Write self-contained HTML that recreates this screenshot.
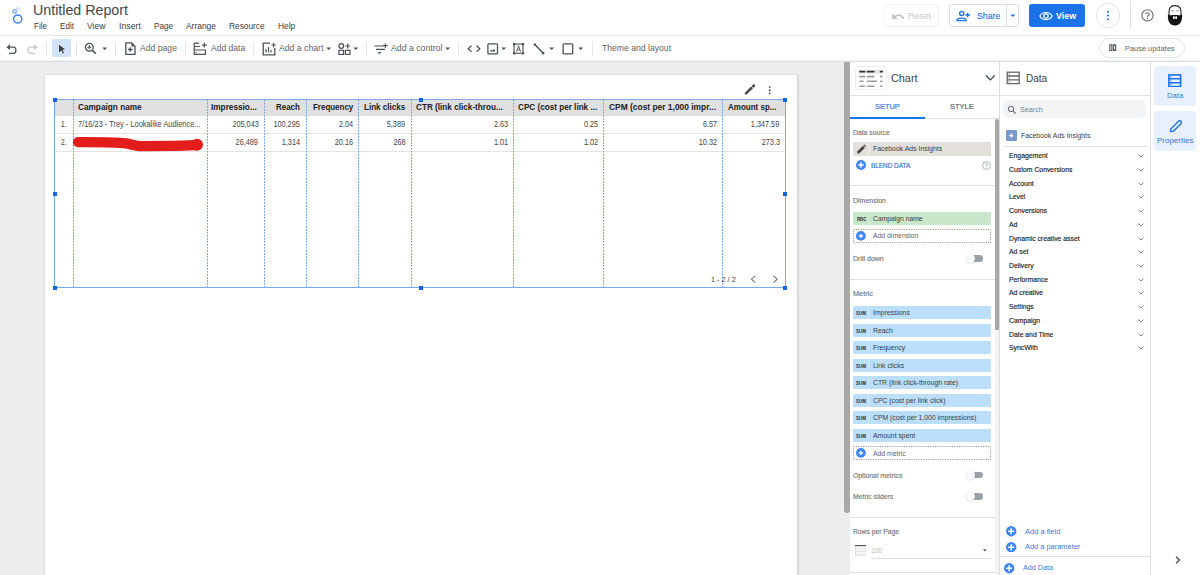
<!DOCTYPE html><html><head><meta charset="utf-8"><style>
html,body{margin:0;padding:0;width:1200px;height:575px;overflow:hidden;background:#fff;position:relative;font-family:"Liberation Sans",sans-serif}
.t{position:absolute;white-space:nowrap;line-height:1;}
.r{position:absolute;}
</style></head><body>
<div class="r" style="left:0px;top:35px;width:1200px;height:1px;background:#e4e6e9;"></div>
<svg class="r" style="left:8px;top:3px;" width="20" height="24" viewBox="0 0 20 24"><circle cx="9.7" cy="16" r="4.1" fill="none" stroke="#3d7ff0" stroke-width="1.45"/>
<circle cx="6.6" cy="8.5" r="1.75" fill="none" stroke="#4f8cf2" stroke-width="1.1"/>
<circle cx="9.6" cy="5.5" r="1.05" fill="none" stroke="#a9c5f7" stroke-width="0.9"/></svg>
<div class="t" style="left:33.10px;top:3px;font-size:14.20px;color:#44474a;transform:scaleX(1.0030);transform-origin:0 0;">Untitled Report</div>
<div class="t" style="left:33.50px;top:22px;font-size:8.60px;color:#3c4043;transform:scaleX(0.9383);transform-origin:0 0;">File</div>
<div class="t" style="left:59.75px;top:22px;font-size:8.60px;color:#3c4043;transform:scaleX(0.9448);transform-origin:0 0;">Edit</div>
<div class="t" style="left:87.00px;top:22px;font-size:8.60px;color:#3c4043;transform:scaleX(1.0050);transform-origin:0 0;">View</div>
<div class="t" style="left:118.75px;top:22px;font-size:8.60px;color:#3c4043;transform:scaleX(1.0159);transform-origin:0 0;">Insert</div>
<div class="t" style="left:153.70px;top:22px;font-size:8.60px;color:#3c4043;transform:scaleX(0.9561);transform-origin:0 0;">Page</div>
<div class="t" style="left:186.00px;top:22px;font-size:8.60px;color:#3c4043;transform:scaleX(0.9804);transform-origin:0 0;">Arrange</div>
<div class="t" style="left:229.30px;top:22px;font-size:8.60px;color:#3c4043;transform:scaleX(0.9699);transform-origin:0 0;">Resource</div>
<div class="t" style="left:278.30px;top:22px;font-size:8.60px;color:#3c4043;transform:scaleX(0.9779);transform-origin:0 0;">Help</div>
<div class="r" style="left:884px;top:4px;width:55px;height:23px;background:transparent;box-sizing:border-box;border:1px solid #eef0f1;border-radius:3px;"></div>
<svg class="r" style="left:891px;top:11px;" width="14" height="9" viewBox="0 0 14 9"><path d="M3.2 6.2 C6 3.2 10.5 3.2 12.8 7.8" fill="none" stroke="#c4c4c4" stroke-width="1.6"/><path d="M1.1 2.3 L1.1 7.9 L6.6 7.9 Z" fill="#c4c4c4"/></svg>
<div class="t" style="left:908.00px;top:12px;font-size:8.80px;color:#c9c9c9;transform:scaleX(1.0006);transform-origin:0 0;">Reset</div>
<div class="r" style="left:949px;top:4px;width:70px;height:23px;background:transparent;box-sizing:border-box;border:1px solid #dadce0;border-radius:3px;"></div>
<div class="r" style="left:1006px;top:5px;width:1px;height:21px;background:#dadce0;"></div>
<svg class="r" style="left:955px;top:10px;" width="17" height="12" viewBox="0 0 17 12"><circle cx="6.7" cy="3.4" r="2.1" fill="none" stroke="#1a73e8" stroke-width="1.35"/><path d="M1.8 10.6 C1.8 7.2 11.2 7.2 11.2 10.6 Z" fill="none" stroke="#1a73e8" stroke-width="1.35" stroke-linejoin="round"/><path d="M10.3 5 H15 M12.65 2.65 V7.35" stroke="#1a73e8" stroke-width="1.35"/></svg>
<div class="t" style="left:976.70px;top:12px;font-size:8.80px;color:#1a73e8;transform:scaleX(0.9924);transform-origin:0 0;-webkit-text-stroke:0.1px #1a73e8;">Share</div>
<svg class="r" style="left:1010px;top:14px;" width="6" height="4" viewBox="0 0 6 4"><path d="M0.3 0.5 H5.3 L2.8 3.1 Z" fill="#1a73e8"/></svg>
<div class="r" style="left:1029px;top:4px;width:56px;height:23px;background:#1a73e8;border-radius:3px;"></div>
<svg class="r" style="left:1038.8px;top:11px;" width="14" height="10" viewBox="0 0 14 10"><path d="M0.8 5 C3.3 0.3 10.7 0.3 13.2 5 C10.7 9.7 3.3 9.7 0.8 5 Z" fill="none" stroke="#fff" stroke-width="1.2"/><circle cx="7" cy="5" r="2.2" fill="none" stroke="#fff" stroke-width="1.2"/></svg>
<div class="t" style="left:1055.70px;top:12px;font-size:8.90px;color:#ffffff;font-weight:bold;transform:scaleX(0.9980);transform-origin:0 0;">View</div>
<div class="r" style="left:1096px;top:3px;width:24px;height:25px;background:#fff;box-sizing:border-box;border:1px solid #e3e3e3;border-radius:50%;"></div>
<svg class="r" style="left:1105px;top:9px;" width="6" height="13" viewBox="0 0 6 13"><circle cx="2.9" cy="3" r="1.05" fill="#1a73e8"/><circle cx="2.9" cy="6.6" r="1.05" fill="#1a73e8"/><circle cx="2.9" cy="10.2" r="1.05" fill="#1a73e8"/></svg>
<div class="r" style="left:1130px;top:1px;width:1px;height:28px;background:#e0e0e0;"></div>
<svg class="r" style="left:1140px;top:9px;" width="15" height="14" viewBox="0 0 15 14"><circle cx="7.5" cy="6.4" r="5.6" fill="none" stroke="#6a6a6a" stroke-width="1.1"/><path d="M5.7 5 C5.7 3.4 9.3 3.4 9.3 5.1 C9.3 6.4 7.5 6.5 7.5 7.9" fill="none" stroke="#6a6a6a" stroke-width="1.1"/><circle cx="7.5" cy="9.5" r="0.7" fill="#6a6a6a"/></svg>
<svg class="r" style="left:1166px;top:4px;" width="18" height="23" viewBox="0 0 18 23"><path d="M3 11 C2.6 4 4.5 1.6 9 1.6 C13.5 1.6 15.4 4 15 11" fill="#fff" stroke="#262626" stroke-width="1.1"/>
<path d="M5 6.8 H8 M10 6.8 H13" stroke="#888" stroke-width="0.8"/>
<path d="M1.9 10.6 C2.2 10.2 2.8 10.4 3.2 10.9 L4.2 11.3 C5.2 11.4 6.2 11 7 10.9 L11 10.9 C11.8 11 12.8 11.4 13.8 11.3 L14.8 10.9 C15.2 10.4 15.8 10.2 16.1 10.6 C16.4 17.5 14.2 21.6 9 21.6 C3.8 21.6 1.6 17.5 1.9 10.6 Z" fill="#111"/>
<path d="M7 12.3 H11 V15 H7 Z" fill="#fff"/><path d="M8.3 12.3 H9.7 V13.2 H8.3 Z M8.4 14.2 H9.6 V15 H8.4 Z" fill="#222"/>
<circle cx="5" cy="17.5" r="0.5" fill="#444"/><circle cx="8" cy="18.3" r="0.5" fill="#444"/><circle cx="11" cy="18.3" r="0.5" fill="#444"/><circle cx="13.6" cy="17.5" r="0.5" fill="#444"/></svg>
<div class="r" style="left:0px;top:60px;width:1200px;height:1px;background:#f3f4f5;"></div>
<div class="r" style="left:0px;top:61px;width:1200px;height:1px;background:#dadce0;"></div>
<svg class="r" style="left:6px;top:43.5px;" width="12" height="11" viewBox="0 0 12 11"><path d="M3.5 3.2 H7.8 C10.6 3.2 10.8 9.4 7.5 9.4 H3" fill="none" stroke="#4d5156" stroke-width="1.3"/><path d="M0.5 3.2 L3.9 0.1 V6.3 Z" fill="#4d5156"/></svg>
<svg class="r" style="left:26px;top:43.5px;" width="12" height="11" viewBox="0 0 12 11"><path d="M8.5 3.2 H4.2 C1.4 3.2 1.2 9.4 4.5 9.4 H9" fill="none" stroke="#c8c8c8" stroke-width="1.3"/><path d="M11.5 3.2 L8.1 0.1 V6.3 Z" fill="#c8c8c8"/></svg>
<div class="r" style="left:46px;top:42px;width:1px;height:15px;background:#e5e5e5;"></div>
<div class="r" style="left:76px;top:42px;width:1px;height:15px;background:#e5e5e5;"></div>
<div class="r" style="left:115px;top:42px;width:1px;height:15px;background:#e5e5e5;"></div>
<div class="r" style="left:185px;top:42px;width:1px;height:15px;background:#e5e5e5;"></div>
<div class="r" style="left:253px;top:42px;width:1px;height:15px;background:#e5e5e5;"></div>
<div class="r" style="left:366px;top:42px;width:1px;height:15px;background:#e5e5e5;"></div>
<div class="r" style="left:458px;top:42px;width:1px;height:15px;background:#e5e5e5;"></div>
<div class="r" style="left:592px;top:42px;width:1px;height:15px;background:#e5e5e5;"></div>
<div class="r" style="left:52px;top:39px;width:19px;height:18px;background:#d3e3fd;border-radius:2px;"></div>
<svg class="r" style="left:57.5px;top:44px;" width="8" height="10" viewBox="0 0 8 10"><path d="M1 0.8 L7.2 5.4 L4.4 5.8 L6 9 L4.8 9.6 L3.3 6.4 L1 8.3 Z" fill="#3c4043"/></svg>
<svg class="r" style="left:84px;top:42px;" width="14" height="13" viewBox="0 0 14 13"><circle cx="5.3" cy="5.3" r="3.9" fill="none" stroke="#4d5156" stroke-width="1.3"/><path d="M8.1 8.1 L11.8 11.6" stroke="#4d5156" stroke-width="1.5"/><path d="M3.3 5.3 H7.3 M5.3 3.3 V7.3" stroke="#4d5156" stroke-width="1.1"/></svg>
<svg class="r" style="left:101.5px;top:46.8px;" width="6" height="4" viewBox="0 0 6 4"><path d="M0.3 0.5 H5.2 L2.75 3 Z" fill="#4d5156"/></svg>
<svg class="r" style="left:123.5px;top:42px;" width="13" height="14" viewBox="0 0 13 14"><path d="M1.8 0.9 H7.6 L11 4.3 V12.3 H1.8 Z" fill="none" stroke="#4d5156" stroke-width="1.3"/><path d="M7.4 1 V4.5 H10.9 Z" fill="#4d5156"/><path d="M4.1 7.5 H8.5 M6.3 5.3 V9.7" stroke="#4d5156" stroke-width="1.3"/></svg>
<div class="t" style="left:139.90px;top:44px;font-size:8.60px;color:#5f6368;transform:scaleX(1.0034);transform-origin:0 0;">Add page</div>
<svg class="r" style="left:192.5px;top:42px;" width="15" height="14" viewBox="0 0 15 14"><path d="M1.2 1 V12.3 H12.4 V8 H1.2 M1.2 1.1 H6 M1.2 4.5 H7" fill="none" stroke="#4d5156" stroke-width="1.2"/><path d="M9 3.2 H13.8 M11.4 0.8 V5.6" stroke="#4d5156" stroke-width="1.2"/><path d="M2.5 10.4 H4" stroke="#4d5156" stroke-width="0.9"/></svg>
<div class="t" style="left:210.60px;top:44px;font-size:8.60px;color:#5f6368;transform:scaleX(0.9917);transform-origin:0 0;">Add data</div>
<svg class="r" style="left:261.5px;top:42px;" width="14" height="14" viewBox="0 0 14 14"><path d="M8 1.2 H1.2 V12.8 H12.8 V6" fill="none" stroke="#4d5156" stroke-width="1.3"/><path d="M4 10.5 V7 M6.5 10.5 V5 M9 10.5 V8" stroke="#4d5156" stroke-width="1.2"/><path d="M9.5 3 H13.8 M11.6 0.8 V5.2" stroke="#4d5156" stroke-width="1.2"/></svg>
<div class="t" style="left:278.50px;top:44px;font-size:8.60px;color:#5f6368;transform:scaleX(1.0095);transform-origin:0 0;">Add a chart</div>
<svg class="r" style="left:325.8px;top:46.8px;" width="6" height="4" viewBox="0 0 6 4"><path d="M0.3 0.5 H5.2 L2.75 3 Z" fill="#4d5156"/></svg>
<svg class="r" style="left:337.5px;top:42.5px;" width="14" height="12" viewBox="0 0 14 12"><circle cx="3.3" cy="3" r="2.4" fill="none" stroke="#4d5156" stroke-width="1.2"/><rect x="0.9" y="7.3" width="4.6" height="4.1" fill="none" stroke="#4d5156" stroke-width="1.2"/><rect x="7.4" y="7.3" width="4.6" height="4.1" fill="none" stroke="#4d5156" stroke-width="1.2"/><path d="M7.3 3 H12.3 M9.8 0.6 V5.4" stroke="#4d5156" stroke-width="1.2"/></svg>
<svg class="r" style="left:352.5px;top:46.8px;" width="6" height="4" viewBox="0 0 6 4"><path d="M0.3 0.5 H5.2 L2.75 3 Z" fill="#4d5156"/></svg>
<svg class="r" style="left:373.5px;top:42px;" width="14" height="13" viewBox="0 0 14 13"><path d="M0.5 4 H9 M2 7.3 H11 M4.5 10.5 H7" stroke="#4d5156" stroke-width="1.2"/><path d="M9 3.6 H13.6 M11.3 1.2 V6" stroke="#4d5156" stroke-width="1.1"/><path d="M5 10.5 V12" stroke="#4d5156" stroke-width="1.2"/></svg>
<div class="t" style="left:390.60px;top:44px;font-size:8.60px;color:#5f6368;transform:scaleX(1.0142);transform-origin:0 0;">Add a control</div>
<svg class="r" style="left:445.3px;top:46.8px;" width="6" height="4" viewBox="0 0 6 4"><path d="M0.3 0.5 H5.2 L2.75 3 Z" fill="#4d5156"/></svg>
<svg class="r" style="left:466.5px;top:44.5px;" width="14" height="8" viewBox="0 0 14 8"><path d="M4.5 0.7 L1.2 3.8 L4.5 6.9 M9.5 0.7 L12.8 3.8 L9.5 6.9" fill="none" stroke="#4d5156" stroke-width="1.3"/></svg>
<svg class="r" style="left:486.5px;top:42.5px;" width="12" height="12" viewBox="0 0 12 12"><rect x="0.9" y="0.9" width="9.6" height="10" rx="0.9" fill="none" stroke="#4d5156" stroke-width="1.3"/><path d="M2.8 8.4 L4.3 6.5 L5.4 7.7 L6.9 5.8 L8.7 8.4 Z" fill="#4d5156"/></svg>
<svg class="r" style="left:500.8px;top:46.6px;" width="6" height="4" viewBox="0 0 6 4"><path d="M0.3 0.5 H5.2 L2.75 3 Z" fill="#4d5156"/></svg>
<svg class="r" style="left:512.8px;top:42.6px;" width="12" height="12" viewBox="0 0 12 12"><rect x="1.1" y="1.1" width="8.9" height="9.2" fill="none" stroke="#4d5156" stroke-width="1.1"/><rect x="0" y="0" width="2.3" height="2.3" fill="#4d5156"/><rect x="8.9" y="0" width="2.3" height="2.3" fill="#4d5156"/><rect x="0" y="9.1" width="2.3" height="2.3" fill="#4d5156"/><rect x="8.9" y="9.1" width="2.3" height="2.3" fill="#4d5156"/><path d="M3.6 8.9 L5.6 2.8 L7.6 8.9 M4.3 6.9 H6.9" fill="none" stroke="#4d5156" stroke-width="0.9"/></svg>
<svg class="r" style="left:532.5px;top:42.5px;" width="12" height="12" viewBox="0 0 12 12"><path d="M1.8 1.4 L10.2 10.2" stroke="#4d5156" stroke-width="1.4"/><circle cx="1.8" cy="1.4" r="1.2" fill="#4d5156"/><circle cx="10.2" cy="10.2" r="1.2" fill="#4d5156"/></svg>
<svg class="r" style="left:549px;top:46.6px;" width="6" height="4" viewBox="0 0 6 4"><path d="M0.3 0.5 H5.2 L2.75 3 Z" fill="#4d5156"/></svg>
<svg class="r" style="left:561.5px;top:42.5px;" width="12" height="12" viewBox="0 0 12 12"><rect x="1.1" y="0.9" width="9.6" height="10" rx="0.9" fill="none" stroke="#4d5156" stroke-width="1.3"/></svg>
<svg class="r" style="left:578px;top:46.6px;" width="6" height="4" viewBox="0 0 6 4"><path d="M0.3 0.5 H5.2 L2.75 3 Z" fill="#4d5156"/></svg>
<div class="t" style="left:601.50px;top:44px;font-size:8.60px;color:#5f6368;transform:scaleX(1.0037);transform-origin:0 0;">Theme and layout</div>
<div class="r" style="left:1099px;top:38px;width:86px;height:20px;background:transparent;box-sizing:border-box;border:1px solid #e2e3e5;border-radius:10px;"></div>
<svg class="r" style="left:1108.5px;top:44.3px;" width="8" height="8" viewBox="0 0 8 8"><rect x="0.8" y="0.8" width="2.1" height="5.6" fill="none" stroke="#5f6368" stroke-width="1.2"/><rect x="4.5" y="0.8" width="2.1" height="5.6" fill="none" stroke="#5f6368" stroke-width="1.2"/></svg>
<div class="t" style="left:1124.75px;top:45px;font-size:7.80px;color:#5f6368;transform:scaleX(0.9512);transform-origin:0 0;">Pause updates</div>
<div class="r" style="left:0px;top:62px;width:850px;height:513px;background:#ededed;"></div>
<div class="r" style="left:45px;top:75px;width:752px;height:505px;background:#ffffff;box-shadow:0 0 2px 0.5px rgba(0,0,0,0.16);"></div>
<div class="r" style="left:844px;top:62px;width:6px;height:451px;background:#a8a8a8;border-radius:0 0 3px 3px;"></div>
<div class="r" style="left:55px;top:100px;width:730px;height:16px;background:#e0e0e0;"></div>
<div class="r" style="left:55px;top:133px;width:730px;height:1px;background:#e3e3e3;"></div>
<div class="r" style="left:55px;top:151px;width:730px;height:1px;background:#e3e3e3;"></div>
<div class="r" style="left:73px;top:100px;width:1px;height:187px;background:repeating-linear-gradient(to bottom,#6a9ff0 0 1px,#94baf5 1px 2px,transparent 2px 3px);"></div>
<div class="r" style="left:207px;top:100px;width:1px;height:187px;background:repeating-linear-gradient(to bottom,#6a9ff0 0 1px,#94baf5 1px 2px,transparent 2px 3px);"></div>
<div class="r" style="left:264px;top:100px;width:1px;height:187px;background:repeating-linear-gradient(to bottom,#6a9ff0 0 1px,#94baf5 1px 2px,transparent 2px 3px);"></div>
<div class="r" style="left:306px;top:100px;width:1px;height:187px;background:repeating-linear-gradient(to bottom,#6a9ff0 0 1px,#94baf5 1px 2px,transparent 2px 3px);"></div>
<div class="r" style="left:358px;top:100px;width:1px;height:187px;background:repeating-linear-gradient(to bottom,#6a9ff0 0 1px,#94baf5 1px 2px,transparent 2px 3px);"></div>
<div class="r" style="left:411px;top:100px;width:1px;height:187px;background:repeating-linear-gradient(to bottom,#6a9ff0 0 1px,#94baf5 1px 2px,transparent 2px 3px);"></div>
<div class="r" style="left:513px;top:100px;width:1px;height:187px;background:repeating-linear-gradient(to bottom,#6a9ff0 0 1px,#94baf5 1px 2px,transparent 2px 3px);"></div>
<div class="r" style="left:603px;top:100px;width:1px;height:187px;background:repeating-linear-gradient(to bottom,#6a9ff0 0 1px,#94baf5 1px 2px,transparent 2px 3px);"></div>
<div class="r" style="left:722px;top:100px;width:1px;height:187px;background:repeating-linear-gradient(to bottom,#6a9ff0 0 1px,#94baf5 1px 2px,transparent 2px 3px);"></div>
<div class="t" style="left:78.00px;top:103px;font-size:8.60px;color:#202124;font-weight:bold;transform:scaleX(0.9590);transform-origin:0 0;">Campaign name</div>
<div class="t" style="left:211.40px;top:103px;font-size:8.60px;color:#202124;font-weight:bold;transform:scaleX(0.9582);transform-origin:0 0;">Impressio...</div>
<div class="t" style="left:276.10px;top:103px;font-size:8.60px;color:#202124;font-weight:bold;transform:scaleX(0.9260);transform-origin:0 0;">Reach</div>
<div class="t" style="left:312.75px;top:103px;font-size:8.60px;color:#202124;font-weight:bold;transform:scaleX(0.9255);transform-origin:0 0;">Frequency</div>
<div class="t" style="left:363.70px;top:103px;font-size:8.60px;color:#202124;font-weight:bold;transform:scaleX(0.9391);transform-origin:0 0;">Link clicks</div>
<div class="t" style="left:415.60px;top:103px;font-size:8.60px;color:#202124;font-weight:bold;transform:scaleX(0.9522);transform-origin:0 0;">CTR (link click-throu...</div>
<div class="t" style="left:517.75px;top:103px;font-size:8.60px;color:#202124;font-weight:bold;transform:scaleX(0.9477);transform-origin:0 0;">CPC (cost per link ...</div>
<div class="t" style="left:608.65px;top:103px;font-size:8.60px;color:#202124;font-weight:bold;transform:scaleX(0.9785);transform-origin:0 0;">CPM (cost per 1,000 impr...</div>
<div class="t" style="left:727.50px;top:103px;font-size:8.60px;color:#202124;font-weight:bold;transform:scaleX(0.9314);transform-origin:0 0;">Amount sp...</div>
<div class="t" style="left:60.50px;top:120px;font-size:8.70px;color:#454545;transform:scaleX(0.7580);transform-origin:0 0;">1.</div>
<div class="t" style="left:78.00px;top:120px;font-size:8.70px;color:#454545;transform:scaleX(0.8542);transform-origin:0 0;">7/16/23 - Trey - Lookalike Audience...</div>
<div class="t" style="right:941.70px;text-align:right;top:120px;font-size:8.80px;color:#454545;transform:scaleX(0.83);transform-origin:100% 0;">205,043</div>
<div class="t" style="right:900.00px;text-align:right;top:120px;font-size:8.80px;color:#454545;transform:scaleX(0.83);transform-origin:100% 0;">100,295</div>
<div class="t" style="right:847.00px;text-align:right;top:120px;font-size:8.80px;color:#454545;transform:scaleX(0.83);transform-origin:100% 0;">2.04</div>
<div class="t" style="right:794.50px;text-align:right;top:120px;font-size:8.80px;color:#454545;transform:scaleX(0.83);transform-origin:100% 0;">5,389</div>
<div class="t" style="right:692.30px;text-align:right;top:120px;font-size:8.80px;color:#454545;transform:scaleX(0.83);transform-origin:100% 0;">2.63</div>
<div class="t" style="right:602.00px;text-align:right;top:120px;font-size:8.80px;color:#454545;transform:scaleX(0.83);transform-origin:100% 0;">0.25</div>
<div class="t" style="right:483.00px;text-align:right;top:120px;font-size:8.80px;color:#454545;transform:scaleX(0.83);transform-origin:100% 0;">6.57</div>
<div class="t" style="right:420.40px;text-align:right;top:120px;font-size:8.80px;color:#454545;transform:scaleX(0.83);transform-origin:100% 0;">1,347.59</div>
<div class="t" style="left:60.50px;top:138px;font-size:8.70px;color:#454545;transform:scaleX(0.7580);transform-origin:0 0;">2.</div>
<div class="t" style="right:941.70px;text-align:right;top:138px;font-size:8.80px;color:#454545;transform:scaleX(0.83);transform-origin:100% 0;">26,489</div>
<div class="t" style="right:900.00px;text-align:right;top:138px;font-size:8.80px;color:#454545;transform:scaleX(0.83);transform-origin:100% 0;">1,314</div>
<div class="t" style="right:847.00px;text-align:right;top:138px;font-size:8.80px;color:#454545;transform:scaleX(0.83);transform-origin:100% 0;">20.16</div>
<div class="t" style="right:794.50px;text-align:right;top:138px;font-size:8.80px;color:#454545;transform:scaleX(0.83);transform-origin:100% 0;">268</div>
<div class="t" style="right:692.30px;text-align:right;top:138px;font-size:8.80px;color:#454545;transform:scaleX(0.83);transform-origin:100% 0;">1.01</div>
<div class="t" style="right:602.00px;text-align:right;top:138px;font-size:8.80px;color:#454545;transform:scaleX(0.83);transform-origin:100% 0;">1.02</div>
<div class="t" style="right:483.00px;text-align:right;top:138px;font-size:8.80px;color:#454545;transform:scaleX(0.83);transform-origin:100% 0;">10.32</div>
<div class="t" style="right:420.40px;text-align:right;top:138px;font-size:8.80px;color:#454545;transform:scaleX(0.83);transform-origin:100% 0;">273.3</div>
<svg class="r" style="left:68px;top:132px;" width="140" height="24" viewBox="0 0 140 24"><path d="M10 10.2 C30 10.1 50 10.5 58 11.4 C64 12.2 66 14 72 14.1 L105 13.9 C115 13.8 122 13.4 128 13.1" fill="none" stroke="#e31c1c" stroke-width="10.2" stroke-linecap="round"/><circle cx="129" cy="12.8" r="6" fill="#e31c1c"/></svg>
<div class="r" style="left:54px;top:99px;width:732px;height:189px;background:transparent;box-sizing:border-box;border:1px solid #79a8f3;"></div>
<div class="r" style="left:53px;top:98px;width:4px;height:4px;background:#1266e6;"></div>
<div class="r" style="left:419px;top:98px;width:4px;height:4px;background:#1266e6;"></div>
<div class="r" style="left:783px;top:98px;width:4px;height:4px;background:#1266e6;"></div>
<div class="r" style="left:53px;top:192px;width:4px;height:4px;background:#1266e6;"></div>
<div class="r" style="left:783px;top:192px;width:4px;height:4px;background:#1266e6;"></div>
<div class="r" style="left:53px;top:286px;width:4px;height:4px;background:#1266e6;"></div>
<div class="r" style="left:419px;top:286px;width:4px;height:4px;background:#1266e6;"></div>
<div class="r" style="left:783px;top:286px;width:4px;height:4px;background:#1266e6;"></div>
<div class="t" style="left:710.60px;top:276px;font-size:8.00px;color:#3c4043;transform:scaleX(0.9105);transform-origin:0 0;">1 - 2 / 2</div>
<svg class="r" style="left:749.5px;top:274.5px;" width="7" height="9" viewBox="0 0 7 9"><path d="M5.2 0.8 L1.5 4.2 L5.2 7.6" fill="none" stroke="#777" stroke-width="1.1"/></svg>
<svg class="r" style="left:771.5px;top:274.5px;" width="7" height="9" viewBox="0 0 7 9"><path d="M1.5 0.8 L5.2 4.2 L1.5 7.6" fill="none" stroke="#777" stroke-width="1.1"/></svg>
<svg class="r" style="left:743px;top:83px;" width="13" height="13" viewBox="0 0 13 13"><path d="M3 10.4 L10.9 2.5" stroke="#4a4a4a" stroke-width="2.5" stroke-linecap="round"/><path d="M7.9 3 L10.4 5.5" stroke="#fff" stroke-width="0.8"/></svg>
<svg class="r" style="left:767px;top:84px;" width="6" height="12" viewBox="0 0 6 12"><circle cx="2.7" cy="3.1" r="0.95" fill="#4a4a4a"/><circle cx="2.7" cy="6.3" r="0.95" fill="#4a4a4a"/><circle cx="2.7" cy="9.4" r="0.95" fill="#4a4a4a"/></svg>
<div class="r" style="left:850px;top:62px;width:149px;height:513px;background:#ffffff;"></div>
<div class="r" style="left:999px;top:62px;width:1px;height:513px;background:#dadce0;"></div>
<div class="r" style="left:850px;top:95px;width:149px;height:1px;background:#e0e0e0;"></div>
<div class="r" style="left:855px;top:66px;width:32px;height:24px;background:#fff;box-sizing:border-box;border:1px solid #ebebeb;border-radius:3px;"></div>
<svg class="r" style="left:857px;top:69px;" width="28" height="20" viewBox="0 0 28 20"><rect x="1.4" y="0.9" width="25.3" height="3.6" fill="#e4e4e4"/>
<path d="M3 2.6 H7.6 M10.6 2.6 H16.8 M23.6 2.6 H25.2" stroke="#333" stroke-width="1.8" stroke-linecap="round"/>
<path d="M3 7.6 H7.6 M10.6 7.6 H16.8 M23.6 7.6 H25" stroke="#999" stroke-width="1.6" stroke-linecap="round"/>
<path d="M3 12.3 H6 M10.6 12.3 H19.3 M23.6 12.3 H25" stroke="#999" stroke-width="1.6" stroke-linecap="round"/>
<path d="M3 17.2 H7.6 M10.6 17.2 H16.8 M23.6 17.2 H25" stroke="#999" stroke-width="1.6" stroke-linecap="round"/>
<path d="M1.4 5 H26.7 M1.4 9.9 H26.7 M1.4 14.7 H26.7" stroke="#f2f2f2" stroke-width="0.6"/></svg>
<div class="t" style="left:890.70px;top:73px;font-size:10.80px;color:#3c4043;transform:scaleX(1.0036);transform-origin:0 0;">Chart</div>
<svg class="r" style="left:985px;top:73.5px;" width="11" height="8" viewBox="0 0 11 8"><path d="M1 1.5 L5.3 5.8 L9.6 1.5" fill="none" stroke="#3c4043" stroke-width="1.2"/></svg>
<div class="t" style="left:874.70px;top:103px;font-size:7.60px;color:#3b78e7;transform:scaleX(0.9788);transform-origin:0 0;-webkit-text-stroke:0.2px #3b78e7;">SETUP</div>
<div class="t" style="left:950.20px;top:103px;font-size:7.60px;color:#5f6368;transform:scaleX(0.9844);transform-origin:0 0;-webkit-text-stroke:0.2px #5f6368;">STYLE</div>
<div class="r" style="left:850px;top:118px;width:149px;height:1px;background:#e0e0e0;"></div>
<div class="r" style="left:850px;top:117px;width:75px;height:2px;background:#1a73e8;"></div>
<div class="r" style="left:995px;top:119px;width:4px;height:211px;background:#a8a8a8;border-radius:2px 2px 0 0;"></div>
<div class="t" style="left:853.00px;top:129px;font-size:7.00px;color:#707070;transform:scaleX(0.9723);transform-origin:0 0;-webkit-text-stroke:0.12px #707070;">Data source</div>
<div class="r" style="left:853px;top:142px;width:138px;height:14px;background:#e3dfdb;border-radius:1px;"></div>
<div class="r" style="left:868px;top:142px;width:2px;height:14px;background:#ece9e6;"></div>
<svg class="r" style="left:856px;top:144px;" width="10" height="11" viewBox="0 0 10 11"><path d="M1.5 9.5 L1.2 7.6 L7 1.8 L8.9 3.7 L3.1 9.5 Z" fill="#444"/><path d="M7.6 1.2 L8.4 0.4 L10.3 2.3 L9.5 3.1 Z" fill="#444"/></svg>
<div class="t" style="left:873.00px;top:145px;font-size:7.20px;color:#3c4043;transform:scaleX(0.9566);transform-origin:0 0;">Facebook Ads Insights</div>
<svg class="r" style="left:855.6px;top:159.8px;" width="10" height="10" viewBox="0 0 10 10"><circle cx="5" cy="5" r="5" fill="#4285f4"/><path d="M2.3 5 H7.7 M5 2.3 V7.7" stroke="#fff" stroke-width="1.5"/></svg>
<div class="t" style="left:870.70px;top:163px;font-size:6.90px;color:#3f76d9;transform:scaleX(0.9290);transform-origin:0 0;-webkit-text-stroke:0.2px #3f76d9;">BLEND DATA</div>
<svg class="r" style="left:981.5px;top:161px;" width="9" height="9" viewBox="0 0 9 9"><circle cx="4.5" cy="4.5" r="3.9" fill="none" stroke="#9aa0a6" stroke-width="0.8"/><path d="M3.3 3.6 C3.3 2.3 5.7 2.3 5.7 3.6 C5.7 4.5 4.5 4.6 4.5 5.6" fill="none" stroke="#9aa0a6" stroke-width="0.8"/><circle cx="4.5" cy="6.9" r="0.45" fill="#9aa0a6"/></svg>
<div class="r" style="left:850px;top:185px;width:145px;height:1px;background:#e0e0e0;"></div>
<div class="t" style="left:853.00px;top:197px;font-size:7.20px;color:#707070;transform:scaleX(0.9702);transform-origin:0 0;-webkit-text-stroke:0.12px #707070;">Dimension</div>
<div class="r" style="left:853px;top:212px;width:138px;height:13px;background:#c8e6c9;border-radius:1px;"></div>
<div class="r" style="left:868px;top:212px;width:1px;height:13px;background:#d5ecd6;"></div>
<div class="t" style="left:856.70px;top:216px;font-size:6.20px;color:#2d2d2d;font-weight:bold;transform:scaleX(0.6922);transform-origin:0 0;">RBC</div>
<div class="t" style="left:873.20px;top:215px;font-size:7.30px;color:#3c4043;transform:scaleX(0.9261);transform-origin:0 0;">Campaign name</div>
<svg class="r" style="left:853px;top:229px;" width="138" height="14" viewBox="0 0 138 14"><rect x="0.5" y="0.5" width="137" height="13" fill="none" stroke="#9a9a9a" stroke-width="1" stroke-dasharray="1.2 1.2"/></svg>
<svg class="r" style="left:856.2px;top:231px;" width="9.8" height="9.8" viewBox="0 0 9.8 9.8"><circle cx="4.9" cy="4.9" r="4.9" fill="#4285f4"/><path d="M2.7 4.9 H7.1000000000000005 M4.9 2.7 V7.1000000000000005" stroke="#fff" stroke-width="1.3"/></svg>
<div class="t" style="left:873.20px;top:232px;font-size:7.20px;color:#5f6368;transform:scaleX(0.9511);transform-origin:0 0;">Add dimension</div>
<div class="t" style="left:853.00px;top:255px;font-size:7.20px;color:#707070;transform:scaleX(0.9744);transform-origin:0 0;-webkit-text-stroke:0.12px #707070;">Drill down</div>
<div class="r" style="left:968px;top:255.3px;width:15.3px;height:6.5px;background:#9aa0a6;border-radius:3.3px;"></div>
<div class="r" style="left:966px;top:253.9px;width:9.4px;height:9.4px;background:#fafafa;border-radius:50%;box-shadow:0 0.3px 1.2px rgba(0,0,0,0.28);"></div>
<div class="r" style="left:850px;top:279px;width:145px;height:1px;background:#e0e0e0;"></div>
<div class="t" style="left:853.00px;top:290px;font-size:7.20px;color:#707070;transform:scaleX(1.0154);transform-origin:0 0;-webkit-text-stroke:0.12px #707070;">Metric</div>
<div class="r" style="left:853px;top:306px;width:138px;height:13px;background:#bbdefb;border-radius:1px;"></div>
<div class="r" style="left:868px;top:306px;width:1px;height:13px;background:#cde5fb;"></div>
<div class="t" style="left:856.00px;top:310px;font-size:6.00px;color:#2d2d2d;font-weight:bold;transform:scaleX(0.7501);transform-origin:0 0;">SUM</div>
<div class="t" style="left:873.20px;top:309px;font-size:7.20px;color:#3c4043;transform:scaleX(0.95);transform-origin:0 0;">Impressions</div>
<div class="r" style="left:853px;top:324px;width:138px;height:13px;background:#bbdefb;border-radius:1px;"></div>
<div class="r" style="left:868px;top:324px;width:1px;height:13px;background:#cde5fb;"></div>
<div class="t" style="left:856.00px;top:328px;font-size:6.00px;color:#2d2d2d;font-weight:bold;transform:scaleX(0.7501);transform-origin:0 0;">SUM</div>
<div class="t" style="left:873.20px;top:327px;font-size:7.20px;color:#3c4043;transform:scaleX(0.95);transform-origin:0 0;">Reach</div>
<div class="r" style="left:853px;top:341px;width:138px;height:13px;background:#bbdefb;border-radius:1px;"></div>
<div class="r" style="left:868px;top:341px;width:1px;height:13px;background:#cde5fb;"></div>
<div class="t" style="left:856.00px;top:345px;font-size:6.00px;color:#2d2d2d;font-weight:bold;transform:scaleX(0.7501);transform-origin:0 0;">SUM</div>
<div class="t" style="left:873.20px;top:344px;font-size:7.20px;color:#3c4043;transform:scaleX(0.95);transform-origin:0 0;">Frequency</div>
<div class="r" style="left:853px;top:359px;width:138px;height:13px;background:#bbdefb;border-radius:1px;"></div>
<div class="r" style="left:868px;top:359px;width:1px;height:13px;background:#cde5fb;"></div>
<div class="t" style="left:856.00px;top:363px;font-size:6.00px;color:#2d2d2d;font-weight:bold;transform:scaleX(0.7501);transform-origin:0 0;">SUM</div>
<div class="t" style="left:873.20px;top:362px;font-size:7.20px;color:#3c4043;transform:scaleX(0.95);transform-origin:0 0;">Link clicks</div>
<div class="r" style="left:853px;top:376px;width:138px;height:13px;background:#bbdefb;border-radius:1px;"></div>
<div class="r" style="left:868px;top:376px;width:1px;height:13px;background:#cde5fb;"></div>
<div class="t" style="left:856.00px;top:380px;font-size:6.00px;color:#2d2d2d;font-weight:bold;transform:scaleX(0.7501);transform-origin:0 0;">SUM</div>
<div class="t" style="left:873.20px;top:379px;font-size:7.20px;color:#3c4043;transform:scaleX(0.95);transform-origin:0 0;">CTR (link click-through rate)</div>
<div class="r" style="left:853px;top:394px;width:138px;height:13px;background:#bbdefb;border-radius:1px;"></div>
<div class="r" style="left:868px;top:394px;width:1px;height:13px;background:#cde5fb;"></div>
<div class="t" style="left:856.00px;top:398px;font-size:6.00px;color:#2d2d2d;font-weight:bold;transform:scaleX(0.7501);transform-origin:0 0;">SUM</div>
<div class="t" style="left:873.20px;top:397px;font-size:7.20px;color:#3c4043;transform:scaleX(0.95);transform-origin:0 0;">CPC (cost per link click)</div>
<div class="r" style="left:853px;top:411px;width:138px;height:13px;background:#bbdefb;border-radius:1px;"></div>
<div class="r" style="left:868px;top:411px;width:1px;height:13px;background:#cde5fb;"></div>
<div class="t" style="left:856.00px;top:415px;font-size:6.00px;color:#2d2d2d;font-weight:bold;transform:scaleX(0.7501);transform-origin:0 0;">SUM</div>
<div class="t" style="left:873.20px;top:414px;font-size:7.20px;color:#3c4043;transform:scaleX(0.95);transform-origin:0 0;">CPM (cost per 1,000 impressions)</div>
<div class="r" style="left:853px;top:429px;width:138px;height:13px;background:#bbdefb;border-radius:1px;"></div>
<div class="r" style="left:868px;top:429px;width:1px;height:13px;background:#cde5fb;"></div>
<div class="t" style="left:856.00px;top:433px;font-size:6.00px;color:#2d2d2d;font-weight:bold;transform:scaleX(0.7501);transform-origin:0 0;">SUM</div>
<div class="t" style="left:873.20px;top:432px;font-size:7.20px;color:#3c4043;transform:scaleX(0.95);transform-origin:0 0;">Amount spent</div>
<svg class="r" style="left:853px;top:446px;" width="138" height="14" viewBox="0 0 138 14"><rect x="0.5" y="0.5" width="137" height="13" fill="none" stroke="#9a9a9a" stroke-width="1" stroke-dasharray="1.2 1.2"/></svg>
<svg class="r" style="left:856.2px;top:448px;" width="9.8" height="9.8" viewBox="0 0 9.8 9.8"><circle cx="4.9" cy="4.9" r="4.9" fill="#4285f4"/><path d="M2.7 4.9 H7.1000000000000005 M4.9 2.7 V7.1000000000000005" stroke="#fff" stroke-width="1.3"/></svg>
<div class="t" style="left:873.20px;top:450px;font-size:7.20px;color:#5f6368;transform:scaleX(0.95);transform-origin:0 0;">Add metric</div>
<div class="t" style="left:853.00px;top:472px;font-size:7.20px;color:#707070;transform:scaleX(0.95);transform-origin:0 0;-webkit-text-stroke:0.12px #707070;">Optional metrics</div>
<div class="r" style="left:968px;top:471.7px;width:15.3px;height:6.5px;background:#9aa0a6;border-radius:3.3px;"></div>
<div class="r" style="left:966px;top:470.3px;width:9.4px;height:9.4px;background:#fafafa;border-radius:50%;box-shadow:0 0.3px 1.2px rgba(0,0,0,0.28);"></div>
<div class="t" style="left:853.00px;top:493px;font-size:7.20px;color:#707070;transform:scaleX(0.95);transform-origin:0 0;-webkit-text-stroke:0.12px #707070;">Metric sliders</div>
<div class="r" style="left:968px;top:493.4px;width:15.3px;height:6.5px;background:#9aa0a6;border-radius:3.3px;"></div>
<div class="r" style="left:966px;top:492px;width:9.4px;height:9.4px;background:#fafafa;border-radius:50%;box-shadow:0 0.3px 1.2px rgba(0,0,0,0.28);"></div>
<div class="r" style="left:850px;top:517px;width:145px;height:1px;background:#e0e0e0;"></div>
<div class="t" style="left:853.00px;top:528px;font-size:7.20px;color:#707070;transform:scaleX(0.9345);transform-origin:0 0;-webkit-text-stroke:0.12px #707070;">Rows per Page</div>
<svg class="r" style="left:855px;top:545px;" width="11" height="11" viewBox="0 0 11 11"><rect x="0" y="0" width="11" height="1.3" fill="#555"/><rect x="0.3" y="1.3" width="10.4" height="9.5" fill="#fafafa" stroke="#d0d0d0" stroke-width="0.5"/><path d="M0.3 4 H10.7 M0.3 6.5 H10.7 M0.3 9 H10.7" stroke="#d0d0d0" stroke-width="0.5"/></svg>
<div class="t" style="left:871.00px;top:547px;font-size:8.00px;color:#b5b5b5;transform:scaleX(0.8243);transform-origin:0 0;">100</div>
<svg class="r" style="left:983px;top:549px;" width="4" height="3" viewBox="0 0 4 3"><path d="M0 0.3 H3.6 L1.8 2.5 Z" fill="#555"/></svg>
<div class="r" style="left:871px;top:558px;width:120px;height:1px;background:#dddddd;"></div>
<div class="r" style="left:850px;top:572px;width:145px;height:1px;background:#e0e0e0;"></div>
<div class="r" style="left:995px;top:330px;width:4px;height:245px;background:#f3f3f3;"></div>
<div class="r" style="left:1000px;top:62px;width:150px;height:513px;background:#ffffff;"></div>
<div class="r" style="left:1150px;top:62px;width:1px;height:513px;background:#dadce0;"></div>
<div class="r" style="left:1000px;top:95px;width:150px;height:1px;background:#e0e0e0;"></div>
<svg class="r" style="left:1006.2px;top:71.2px;" width="15" height="14" viewBox="0 0 15 14"><rect x="1.2" y="1.2" width="12" height="11.4" fill="none" stroke="#666" stroke-width="1.3"/><path d="M1.2 5 H13.2 M1.2 8.8 H13.2" stroke="#666" stroke-width="1.3"/><circle cx="3.3" cy="3.1" r="0.55" fill="#444"/><circle cx="3.3" cy="6.9" r="0.55" fill="#444"/><circle cx="3.3" cy="10.7" r="0.55" fill="#444"/></svg>
<div class="t" style="left:1026.30px;top:74px;font-size:10.20px;color:#3c4043;transform:scaleX(0.9836);transform-origin:0 0;">Data</div>
<div class="r" style="left:1003px;top:100px;width:143px;height:18px;background:#f1f3f4;border-radius:6px;"></div>
<svg class="r" style="left:1006.5px;top:104.5px;" width="10" height="10" viewBox="0 0 10 10"><circle cx="4" cy="3.9" r="2.7" fill="none" stroke="#5f6368" stroke-width="1"/><path d="M6 6 L8.6 8.6" stroke="#5f6368" stroke-width="1.1"/></svg>
<div class="t" style="left:1019.90px;top:106px;font-size:7.80px;color:#80868b;transform:scaleX(0.9267);transform-origin:0 0;">Search</div>
<div class="r" style="left:1006px;top:130px;width:11px;height:11px;background:#7b9acc;border-radius:1px;"></div>
<svg class="r" style="left:1008px;top:132px;" width="7" height="7" viewBox="0 0 7 7"><path d="M1 3.5 H4 M3 1.8 L5 3.5 L3 5.2 Z" fill="#fff" stroke="#fff" stroke-width="1"/></svg>
<div class="t" style="left:1020.70px;top:132px;font-size:7.20px;color:#3c4043;transform:scaleX(0.9607);transform-origin:0 0;">Facebook Ads Insights</div>
<div class="r" style="left:1003px;top:146px;width:144px;height:1px;background:#e0e0e0;"></div>
<div class="t" style="left:1008.60px;top:152px;font-size:7.20px;color:#202124;-webkit-text-stroke:0.15px #202124;transform:scaleX(0.95);transform-origin:0 0;">Engagement</div>
<svg class="r" style="left:1137.5px;top:153.5px;" width="6" height="4" viewBox="0 0 6 4"><path d="M0.6 0.6 L3 3 L5.4 0.6" fill="none" stroke="#5f6368" stroke-width="0.8"/></svg>
<div class="t" style="left:1008.60px;top:166px;font-size:7.20px;color:#202124;-webkit-text-stroke:0.15px #202124;transform:scaleX(0.95);transform-origin:0 0;">Custom Conversions</div>
<svg class="r" style="left:1137.5px;top:167.5px;" width="6" height="4" viewBox="0 0 6 4"><path d="M0.6 0.6 L3 3 L5.4 0.6" fill="none" stroke="#5f6368" stroke-width="0.8"/></svg>
<div class="t" style="left:1008.60px;top:180px;font-size:7.20px;color:#202124;-webkit-text-stroke:0.15px #202124;transform:scaleX(0.95);transform-origin:0 0;">Account</div>
<svg class="r" style="left:1137.5px;top:181.5px;" width="6" height="4" viewBox="0 0 6 4"><path d="M0.6 0.6 L3 3 L5.4 0.6" fill="none" stroke="#5f6368" stroke-width="0.8"/></svg>
<div class="t" style="left:1008.60px;top:193px;font-size:7.20px;color:#202124;-webkit-text-stroke:0.15px #202124;transform:scaleX(0.95);transform-origin:0 0;">Level</div>
<svg class="r" style="left:1137.5px;top:194.5px;" width="6" height="4" viewBox="0 0 6 4"><path d="M0.6 0.6 L3 3 L5.4 0.6" fill="none" stroke="#5f6368" stroke-width="0.8"/></svg>
<div class="t" style="left:1008.60px;top:207px;font-size:7.20px;color:#202124;-webkit-text-stroke:0.15px #202124;transform:scaleX(0.95);transform-origin:0 0;">Conversions</div>
<svg class="r" style="left:1137.5px;top:208.5px;" width="6" height="4" viewBox="0 0 6 4"><path d="M0.6 0.6 L3 3 L5.4 0.6" fill="none" stroke="#5f6368" stroke-width="0.8"/></svg>
<div class="t" style="left:1008.60px;top:221px;font-size:7.20px;color:#202124;-webkit-text-stroke:0.15px #202124;transform:scaleX(0.95);transform-origin:0 0;">Ad</div>
<svg class="r" style="left:1137.5px;top:222.5px;" width="6" height="4" viewBox="0 0 6 4"><path d="M0.6 0.6 L3 3 L5.4 0.6" fill="none" stroke="#5f6368" stroke-width="0.8"/></svg>
<div class="t" style="left:1008.60px;top:235px;font-size:7.20px;color:#202124;-webkit-text-stroke:0.15px #202124;transform:scaleX(0.95);transform-origin:0 0;">Dynamic creative asset</div>
<svg class="r" style="left:1137.5px;top:236.5px;" width="6" height="4" viewBox="0 0 6 4"><path d="M0.6 0.6 L3 3 L5.4 0.6" fill="none" stroke="#5f6368" stroke-width="0.8"/></svg>
<div class="t" style="left:1008.60px;top:248px;font-size:7.20px;color:#202124;-webkit-text-stroke:0.15px #202124;transform:scaleX(0.95);transform-origin:0 0;">Ad set</div>
<svg class="r" style="left:1137.5px;top:249.5px;" width="6" height="4" viewBox="0 0 6 4"><path d="M0.6 0.6 L3 3 L5.4 0.6" fill="none" stroke="#5f6368" stroke-width="0.8"/></svg>
<div class="t" style="left:1008.60px;top:262px;font-size:7.20px;color:#202124;-webkit-text-stroke:0.15px #202124;transform:scaleX(0.95);transform-origin:0 0;">Delivery</div>
<svg class="r" style="left:1137.5px;top:263.5px;" width="6" height="4" viewBox="0 0 6 4"><path d="M0.6 0.6 L3 3 L5.4 0.6" fill="none" stroke="#5f6368" stroke-width="0.8"/></svg>
<div class="t" style="left:1008.60px;top:276px;font-size:7.20px;color:#202124;-webkit-text-stroke:0.15px #202124;transform:scaleX(0.95);transform-origin:0 0;">Performance</div>
<svg class="r" style="left:1137.5px;top:277.5px;" width="6" height="4" viewBox="0 0 6 4"><path d="M0.6 0.6 L3 3 L5.4 0.6" fill="none" stroke="#5f6368" stroke-width="0.8"/></svg>
<div class="t" style="left:1008.60px;top:289px;font-size:7.20px;color:#202124;-webkit-text-stroke:0.15px #202124;transform:scaleX(0.95);transform-origin:0 0;">Ad creative</div>
<svg class="r" style="left:1137.5px;top:290.5px;" width="6" height="4" viewBox="0 0 6 4"><path d="M0.6 0.6 L3 3 L5.4 0.6" fill="none" stroke="#5f6368" stroke-width="0.8"/></svg>
<div class="t" style="left:1008.60px;top:303px;font-size:7.20px;color:#202124;-webkit-text-stroke:0.15px #202124;transform:scaleX(0.95);transform-origin:0 0;">Settings</div>
<svg class="r" style="left:1137.5px;top:304.5px;" width="6" height="4" viewBox="0 0 6 4"><path d="M0.6 0.6 L3 3 L5.4 0.6" fill="none" stroke="#5f6368" stroke-width="0.8"/></svg>
<div class="t" style="left:1008.60px;top:317px;font-size:7.20px;color:#202124;-webkit-text-stroke:0.15px #202124;transform:scaleX(0.95);transform-origin:0 0;">Campaign</div>
<svg class="r" style="left:1137.5px;top:318.5px;" width="6" height="4" viewBox="0 0 6 4"><path d="M0.6 0.6 L3 3 L5.4 0.6" fill="none" stroke="#5f6368" stroke-width="0.8"/></svg>
<div class="t" style="left:1008.60px;top:331px;font-size:7.20px;color:#202124;-webkit-text-stroke:0.15px #202124;transform:scaleX(0.95);transform-origin:0 0;">Date and Time</div>
<svg class="r" style="left:1137.5px;top:332.5px;" width="6" height="4" viewBox="0 0 6 4"><path d="M0.6 0.6 L3 3 L5.4 0.6" fill="none" stroke="#5f6368" stroke-width="0.8"/></svg>
<div class="t" style="left:1008.60px;top:344px;font-size:7.20px;color:#202124;-webkit-text-stroke:0.15px #202124;transform:scaleX(0.95);transform-origin:0 0;">SyncWith</div>
<svg class="r" style="left:1137.5px;top:345.5px;" width="6" height="4" viewBox="0 0 6 4"><path d="M0.6 0.6 L3 3 L5.4 0.6" fill="none" stroke="#5f6368" stroke-width="0.8"/></svg>
<svg class="r" style="left:1006.4px;top:526.4px;" width="10.4" height="10.4" viewBox="0 0 10.4 10.4"><circle cx="5.2" cy="5.2" r="5.2" fill="#4285f4"/><path d="M2.2 5.2 H8.2 M5.2 2.2 V8.2" stroke="#fff" stroke-width="1.5"/></svg>
<div class="t" style="left:1024.60px;top:528px;font-size:7.40px;color:#3f76d9;transform:scaleX(1.0122);transform-origin:0 0;">Add a field</div>
<svg class="r" style="left:1006.4px;top:541.8px;" width="10.4" height="10.4" viewBox="0 0 10.4 10.4"><circle cx="5.2" cy="5.2" r="5.2" fill="#4285f4"/><path d="M2.2 5.2 H8.2 M5.2 2.2 V8.2" stroke="#fff" stroke-width="1.5"/></svg>
<div class="t" style="left:1024.60px;top:543px;font-size:7.40px;color:#3f76d9;transform:scaleX(1.0050);transform-origin:0 0;">Add a parameter</div>
<div class="r" style="left:1000px;top:556px;width:150px;height:1px;background:#e0e0e0;"></div>
<svg class="r" style="left:1004.3px;top:563.3px;" width="10.4" height="10.4" viewBox="0 0 10.4 10.4"><circle cx="5.2" cy="5.2" r="5.2" fill="#4285f4"/><path d="M2.2 5.2 H8.2 M5.2 2.2 V8.2" stroke="#fff" stroke-width="1.5"/></svg>
<div class="t" style="left:1022.90px;top:564px;font-size:7.40px;color:#3f76d9;transform:scaleX(0.9754);transform-origin:0 0;">Add Data</div>
<div class="r" style="left:1151px;top:62px;width:49px;height:513px;background:#ffffff;"></div>
<div class="r" style="left:1154px;top:66px;width:42px;height:40px;background:#e8f0fe;border-radius:4px;"></div>
<svg class="r" style="left:1168.3px;top:73.8px;" width="13.5" height="13.5" viewBox="0 0 13.5 13.5"><rect x="0.9" y="0.9" width="11.7" height="11.7" fill="none" stroke="#1a73e8" stroke-width="1.6"/><path d="M0.9 4.8 H12.6 M0.9 8.7 H12.6" stroke="#1a73e8" stroke-width="1.4"/><path d="M2.5 2.9 H3.6 M2.5 6.8 H3.6 M2.5 10.7 H3.6" stroke="#1a73e8" stroke-width="0.9"/></svg>
<div class="t" style="left:1167.00px;top:92px;font-size:7.80px;color:#3f76d9;transform:scaleX(0.9890);transform-origin:0 0;">Data</div>
<div class="r" style="left:1154px;top:111px;width:42px;height:40px;background:#e8f0fe;border-radius:4px;"></div>
<svg class="r" style="left:1168.5px;top:119.5px;" width="13" height="13" viewBox="0 0 13 13"><path d="M1.5 11.5 L1.8 9 L9.5 1.3 C10.2 0.6 11.4 0.6 12 1.3 C12.6 2 12.6 3 12 3.7 L4.3 11.3 Z" fill="none" stroke="#1a73e8" stroke-width="1.4"/></svg>
<div class="t" style="left:1156.80px;top:137px;font-size:7.80px;color:#3f76d9;transform:scaleX(1.0238);transform-origin:0 0;">Properties</div>
<svg class="r" style="left:1174.5px;top:556px;" width="6" height="8" viewBox="0 0 6 8"><path d="M1 0.8 L4.5 4 L1 7.2" fill="none" stroke="#3c4043" stroke-width="1.2"/></svg>
</body></html>
